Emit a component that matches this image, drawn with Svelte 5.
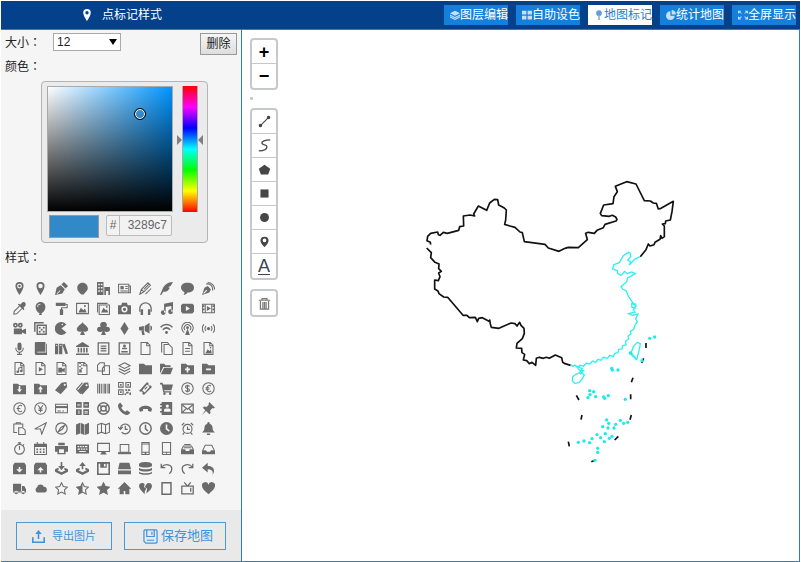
<script>
  let size = "12";
  let hex = "3289c7";
  let hue = 205;
  let activeTab = "mark";
  let activeIcon = null;

  // picker cursor, percent of the square
  const cursor = { x: 74.5, y: 22 };

  const c = (x, y, r) =>
    `M${x - r} ${y}a${r} ${r} 0 1 0 ${2 * r} 0a${r} ${r} 0 1 0 ${-2 * r} 0z`;
  const r = (x, y, w, h) => `M${x} ${y}h${w}v${h}h${-w}z`;

  const pin = "M8 0a5 5 0 0 0-5 5c0 4 5 11 5 11s5-7 5-11a5 5 0 0 0-5-5z";
  const page = "M2.5.5h7.5l3.5 3.5v11.5h-11zM9.5.5v4h4";
  const folder = "M0 2h6l2 2h8v11H0z";
  const tag = "M8 1l6-1 1 6-8 9-7-5z" + c(12, 3.5, 1.3);
  const star = "M8 1l2.2 4.6 5 .7-3.600 3.500.9 5L8 12.400l-4.500 2.400.9-5L.8 6.300l5-.7z";
  const phone = "M3.500 .7h9v14.600h-9zM3.500 12.500h9M7 14h2M3.500 2.500h9";
  const ring = c(8, 8, 7);
  const heart = "M8 15C3 11 0 8 0 5a4 4 0 0 1 8-1.500A4 4 0 0 1 16 5c0 3-3 6-8 10z";

  // f: filled shape, s: stroked lines, w: stroke width
  const icons = [
    { name: "location", f: pin + c(8, 5, 3) + c(8, 5, 1.5) },
    { name: "location outline", f: pin + c(8, 5, 2.8) },
    { name: "pen", f: "M0 16l2-9 5-3 5 5-3 5zM8 3l3-3 5 5-3 3zM2 14l4-4 .7.7-4 4z" },
    { name: "ellipse", f: "M8 1c4 0 6.500 3 6.500 6.500C14.500 11 11 13 9.500 15.500h-3C4 13 1.500 11 1.500 7.500S4 1 8 1z" },
    { name: "office", f: r(0, 0, 8, 16) + r(1.5, 2, 2, 2) + r(4.8, 2, 2, 2) + r(1.5, 6, 2, 2) + r(4.8, 6, 2, 2) + r(1.5, 10, 2, 2) + r(4.8, 10, 2, 2) + "M9 6h7v10h-2v-5h-3v5H9z" },
    { name: "newspaper", f: r(3, 5, 4, 4), s: "M.7 2.700h12.600v10.600H.7zM13 5h2.300v8.300H13M9 5.500h3M9 8h3M3 11h9" },
    { name: "pencil", s: "M1 15l2-6 8-8 3 3-8 8zM3 9l3 3M6 9l7-7M8 15l7-7" },
    { name: "quill", f: "M16 0C9 0 5 4 3 9L0 16h1.500L4 12c6 0 7-3 8-5l-2-.5 3-1.500C14 3 15 2 16 0z" },
    { name: "bubble", f: "M8 1c5 0 8 2.500 8 6s-3 6-8 6c-1 1.500-3 3-5 3 1-1 1.500-2.500 1-3.700C1.500 11 0 9 0 7c0-3.500 3-6 8-6z" },
    { name: "connection", f: "M0 16l3-9 4-2 4 4-2 4zM1.500 13.500l4-4 1 1-4 4z", s: "M5 2.500c5-1 9 3 8 8M7 .7c5 0 8.500 4 8.500 8.500" },
    { name: "eyedropper", f: "M9 3l2-2c3-3 6 1 4 4l-2 2 1 2-1 1-7-7 1-1z", s: "M8 5L1.500 11.500 1 15l3.500-.5L11 8" },
    { name: "balloon", f: "M8 0c4 0 6 3 6 6 0 4-3 7-5 8l1 2H6l1-2C5 13 2 10 2 6c0-3 2-6 6-6zM5 6c0-2 1-3 3-3V2C5 2 4 4 4 6z" },
    { name: "paint roller", f: r(1, 1, 12, 4) + r(6, 9, 4, 7), s: "M13 3h2v4H8v3" },
    { name: "image", f: "M3 13l3-6 3 3 2-2 2 5z" + c(11, 5, 1.2), s: "M.7 1.700h14.600v12.600H.7z" },
    { name: "images", f: "M5 13l3-6 3 3 1-1 2 4z" + c(12, 6, 1.1), s: "M2.700 3.700h12.600v11.600H2.700zM.7 13V1.700H13" },
    { name: "camera", f: "M0 4h4l1-3h6l1 3h4v11H0z" + c(8, 9, 3.8) + c(8, 9, 2) },
    { name: "headphones", f: r(2, 9, 3, 7) + r(11, 9, 3, 7), s: "M1 12V8a7 7 0 0 1 14 0v4", w: 1.6 },
    { name: "music", f: "M5 2l11-2v12H14V5L7 6v7H5z" + c(4, 13, 3) + c(13, 12, 3) },
    { name: "play", f: "M2 2h12l2 2v8l-2 2H2l-2-2V4zM6 5v6l5-3z" },
    { name: "film", f: "M6 5v6l5-3z" + r(1, 4, 2, 2) + r(1, 8, 2, 2) + r(13, 4, 2, 2) + r(13, 8, 2, 2), s: "M.7 2.700h14.600v10.600H.7zM4 3v10M12 3v10" },
    { name: "video camera", f: c(3, 4, 3) + c(3, 4, 1) + c(9, 4, 3) + c(9, 4, 1) + "M1 8h10v2l5-2v7l-5-2v2H1z" },
    { name: "dice", f: c(7, 7, 1.3) + c(12, 7, 1.3) + c(7, 12, 1.3) + c(12, 12, 1.3) + c(9.5, 9.5, 1.3), s: "M4 4h11v11H4zM1 12V1h11", w: 1.8 },
    { name: "pacman", f: "M14 3a8 8 0 1 0 0 10L8 8zM8 3a1 1 0 1 0 2 0 1 1 0 1 0-2 0z" },
    { name: "spades", f: "M8 0c1 3 7 5 7 9 0 3-4 4-6 2l2 5H5l2-5c-2 2-6 1-6-2 0-4 6-6 7-9z" },
    { name: "clubs", f: "M8 0a3.500 3.500 0 0 1 3 6c3-1 5 1 5 3 0 4-5 4-7 2l2 5H5l2-5c-2 2-7 2-7-2 0-2 2-4 5-3a3.500 3.500 0 0 1 3-6z" },
    { name: "diamonds", f: "M8 0l5 8-5 8-5-8z" },
    { name: "bullhorn", f: "M0 6l6-1v6l-6-1zM7 5l6-4v13l-6-3zM3 11h3l1 5H4zM14 4c3 1 3 6 0 7z" },
    { name: "wifi", f: c(8, 13, 1.8), s: "M.7 6.500c4-4.500 10.600-4.500 14.600 0M3.500 9.500c3-3 6-3 9 0", w: 1.8 },
    { name: "podcast", f: c(8, 7, 1.8) + "M8 8l3 8H5z", s: "M4 13A7 7 0 1 1 12 13M5 10a4 4 0 1 1 6 0" },
    { name: "feed", f: c(8, 8, 2), s: "M5 5a4 4 0 0 0 0 6M11 5a4 4 0 0 1 0 6M2.500 3a7 7 0 0 0 0 10M13.500 3a7 7 0 0 1 0 10" },
    { name: "mic", f: "M5.500 3a2.500 2.500 0 0 1 5 0v5a2.500 2.500 0 0 1-5 0z" + r(5, 14.5, 6, 1.5), s: "M3.500 7v1a4.500 4.500 0 0 0 9 0V7M8 12v3" },
    { name: "book", f: "M2 0h12v12H4v1h11V2h1v14H2L1 14V1z" },
    { name: "books", f: r(0, 2, 4, 13) + r(5, 2, 4, 13) + "M9 3l3-1 4 12-3 1zM1 4v1h2V4zM6 4v1h2V4z" },
    { name: "library", f: "M8 0l8 5v1H0V5z" + r(2, 7, 2, 6) + r(5.5, 7, 2, 6) + r(9, 7, 2, 6) + r(12.3, 7, 2, 6) + r(0, 14, 16, 2) },
    { name: "file text", s: "M1.500 1h13v14h-13zM4.500 5h7M4.500 8h7M4.500 11h7", w: 1.6 },
    { name: "profile", f: c(8, 5, 1.8) + r(5, 7, 6, 2), s: "M1.500 1h13v14h-13zM4 12h8", w: 1.6 },
    { name: "file empty", s: page },
    { name: "files empty", s: "M5 3h6l4 4v8.500H5zM2 13V.6h7l2 2" },
    { name: "file lines", s: page + "M5 8h6M5 11.500h6" },
    { name: "file picture", f: "M4 14l3-5 2 2 2-2 1 5z" + c(10.5, 7, 1), s: page },
    { name: "file music", f: c(5.8, 12, 1.6) + c(10.2, 11, 1.6), s: page + "M7 12V7.500l4-1V11" },
    { name: "file play", f: "M6 6v6l5-3z", s: page },
    { name: "file video", f: "M4 7h5v2l3-2v6l-3-2v2H4z", s: page },
    { name: "file zip", f: r(4, 1, 2, 1.6) + r(6, 3, 2, 1.6) + r(4, 5, 2, 1.6) + r(6, 7, 2, 1.6) + r(4, 9, 3, 4), s: page },
    { name: "copy", s: "M3.500 1H9v10H.7V4zM9 4.500h6.300v10.800H6.700V7.500L9.500 4.500" },
    { name: "stack", s: "M8 1l7 3.500L8 8 1 4.500zM1 8l7 3.500L15 8M1 11.500L8 15l7-3.500" },
    { name: "folder", f: folder },
    { name: "folder open", f: "M0 14V2h5l2 2h6v2H4zM5 7h11l-3 8H1z" },
    { name: "folder plus", f: folder + "M7 6v2H5v2h2v3h2v-3h2V8H9V6z" },
    { name: "folder minus", f: folder + r(5, 8, 6, 2) },
    { name: "folder download", f: folder + "M7 5v4H5l3 4 3-4H9V5z" },
    { name: "folder upload", f: folder + "M7 13V9H5l3-4 3 4H9v4z" },
    { name: "price tag", f: tag },
    { name: "price tags", f: "M10 1l5-.5 1 6-8 9-6-5z" + c(13, 4, 1.3), s: "M8 .8L.6 9 6 14.500" },
    { name: "barcode", f: r(0, 2, 1, 12) + r(2, 2, 2, 12) + r(5, 2, 1, 12) + r(7, 2, 1, 12) + r(9, 2, 2, 12) + r(12, 2, 1, 12) + r(14, 2, 2, 12) },
    { name: "qrcode", f: r(2.5, 2.5, 2, 2) + r(11.5, 2.5, 2, 2) + r(2.5, 11.5, 2, 2) + r(9, 9, 2, 2) + r(12, 9, 3, 2) + r(10, 12, 3, 2) + r(14, 13, 2, 3) + r(8, 14, 2, 2), s: "M.7.7h5.600v5.600H.7zM9.700.7h5.600v5.600H9.700zM.7 9.700h5.600v5.600H.7z" },
    { name: "ticket", f: "M0 11L10 0l2 2c-1 2 0 3 2 2l2 2L6 16l-2-2c1-2 0-3-2-2zM4 10l3 3 6-7-3-3z", s: "M7 9l3-3" },
    { name: "cart", f: "M0 1h3l1 2h12l-2 7H5l.5 1.500H14V13H4L2 3H0z" + c(5.5, 14.5, 1.5) + c(12.5, 14.5, 1.5) },
    { name: "dollar", s: ring + "M10.500 5.500c-1-1.500-5-1.500-5 .7 0 2.500 5 1.200 5 3.600 0 2.200-4 2.200-5 .5M8 3.500v9" },
    { name: "euro", s: ring + "M11 5c-2-2-5-.5-5 3s3 5 5 3M4.500 7h4.500M4.500 9h4.500" },
    { name: "pound", s: ring + "M11 5c-2-2-5-.5-5 3s3 5 5 3M4.500 8h4.500" },
    { name: "yen", s: ring + "M5 4l3 4 3-4M8 8v4.500M5.500 8.500h5M5.500 10.500h5" },
    { name: "credit card", f: r(0, 5, 16, 2.5), s: "M.7 2.700h14.600v10.600H.7zM3 11h4M9 11h2" },
    { name: "calculator", f: r(0, 0, 7, 7) + r(9, 0, 7, 7) + r(0, 9, 7, 7) + r(9, 9, 7, 7) + r(1.5, 3, 4, 1.2) + r(10.5, 3, 4, 1.2) + r(3, 10.5, 1.2, 4) + r(10.5, 11, 4, 1) + r(10.5, 13, 4, 1) },
    { name: "lifebuoy", s: c(8, 8, 7) + c(8, 8, 3.2) + "M3 4l3 2M13 4l-3 2M3 12l3-2M13 12l-3-2", w: 1.8 },
    { name: "phone", f: "M3 1l3 4-2 2c1 2 3 4 5 5l2-2 4 3c-1 2-2 3-4 3C6 16 0 9 0 5c0-2 1-3 3-4z" },
    { name: "hang up", f: "M0 9c1-6 15-6 16 0l-1 3-4-1V8.500H5V11l-4 1z" },
    { name: "address book", f: "M2 0h13v16H2zM7 5a2 2 0 1 0 4 0 2 2 0 1 0-4 0zM5 12h8V9L11 8H7L5 9z" + r(0, 2, 2, 2) + r(0, 6, 2, 2) + r(0, 11, 2, 2) },
    { name: "envelope", s: "M1 2.500h14v11H1zM2 4l6 5 6-5M2 12.500l4-4M14 12.500l-4-4", w: 1.5 },
    { name: "pushpin", f: "M9 0l7 7-2 1-1-.5-3 3 .5 3L9 15l-4-4-5 5 4-6-3-3 1.500-1.500 3 .5 3-3L8 2z" },
    { name: "paste", s: "M5 13H1V2.500h11V6M4 3V1h5v2M7 7h5l3 3v5.300H7z" },
    { name: "compass arrow", s: "M1 8.500L15 1 9.500 15 8 8.500z" },
    { name: "compass", s: ring + "M12 4L9 9l-5 3 3-5z", w: 1.4 },
    { name: "map filled", f: "M0 3l5-2v13l-5 2zM5.700 1L10.300 3v13l-4.600-2zM11 3l5-2v13l-5 2z" },
    { name: "map", s: "M.7 3.500L5.500 1.500l5 2 4.800-2v11l-4.800 2-5-2-4.800 2zM5.500 1.500v11M10.500 3.500v11" },
    { name: "history", s: "M3 8a6 6 0 1 1 1.500 4.500M0 6l3 3 3-3M9 4.500V9h3", w: 1.5 },
    { name: "clock", s: ring + "M8 3.500v5l3 2.500", w: 1.8 },
    { name: "clock filled", f: c(8, 8, 8) + "M7 3v6l4 3 1-1.500L9 8V3z" },
    { name: "alarm", s: c(8, 8.5, 5.5) + "M8 5.500V9h3M1 4l3-3M15 4l-3-3M4 13l-2 2.500M12 13l2 2.500", w: 1.4 },
    { name: "bell", f: "M8 0c1 0 1.500 1 1.500 2C12 3 13 5 13 7c0 3 1 4 3 6H0c2-2 3-3 3-6 0-2 1-4 3.500-5C6.500 1 7 0 8 0z" + r(6, 14, 4, 2) },
    { name: "stopwatch", s: c(8, 9, 6) + "M8 3V1M6 1h4M8 5v4.500M12.500 4l1-1", w: 1.4 },
    { name: "calendar", f: r(0, 2, 16, 4) + r(3, 8, 2, 2) + r(7, 8, 2, 2) + r(11, 8, 2, 2) + r(3, 11.5, 2, 2) + r(7, 11.5, 2, 2) + r(11, 11.5, 2, 2), s: "M.7 3v12.300h14.600V3M4 0v3M12 0v3" },
    { name: "printer", f: r(4, 1, 8, 3) + "M0 5h16v7h-3v3H3v-3H0zM5 9v4.500h6V9z" },
    { name: "keyboard", f: "M0 3h16v11H0z" + r(2, 5, 2, 1.5) + r(5, 5, 2, 1.5) + r(8, 5, 2, 1.5) + r(11, 5, 3, 1.5) + r(2, 8, 3, 1.5) + r(6, 8, 2, 1.5) + r(9, 8, 2, 1.5) + r(12, 8, 2, 1.5) + r(4, 11, 8, 1.3) },
    { name: "display", f: "M6 12h4l2 3.500H4z", s: "M.7 1.700h14.600v10H.7z" },
    { name: "laptop", f: "M0 12.500h16V15H0z", s: "M2.700 3h10.600v9.500H2.700z" },
    { name: "mobile", s: phone },
    { name: "tablet", s: "M3 .7h10v14.600H3zM3 12.700h10M7.500 14h1" },
    { name: "drawer full", f: "M0 9h5l1 2h4l1-2h5v6H0z", s: "M1 9l2-4h10l2 4M4 3h8M3.500 7h9" },
    { name: "drawer", f: "M0 10h5l1 2h4l1-2h5v5H0z", s: "M1 10l3-6h8l3 6" },
    { name: "box in", f: "M2 1h12l2 3v11H0V4zM7 6v3H4l4 4 4-4H9V6z" },
    { name: "box out", f: "M2 1h12l2 3v11H0V4zM7 13v-3H4l4-4 4 4H9v3z" },
    { name: "download", f: "M7 0h2v5h3L8 10 4 5h3zM0 9l4-2 1 2-2 1 5 2.500 5-2.500-2-1 1-2 4 2v3l-8 4-8-4z" },
    { name: "upload", f: "M7 9h2V5h3L8 0 4 5h3zM0 9l4-2 1 2-2 1 5 2.500 5-2.500-2-1 1-2 4 2v3l-8 4-8-4z" },
    { name: "floppy disk", f: r(4, 1, 8, 6) + r(8.5, 2, 2, 3.5), s: "M1 1h14v14H1z", w: 2 },
    { name: "drive", f: "M2 1h12l2 8H0zM0 10.500h16V15H0z" },
    { name: "database", f: "M0 3c0-4 16-4 16 0v1.500c0 3-16 3-16 0zM0 7c3 2.500 13 2.500 16 0v2.500c0 3-16 3-16 0zM0 12c3 2.500 13 2.500 16 0v1.500c0 3-16 3-16 0z" },
    { name: "undo", s: "M1.500 2v5h5M2 6.500C6 1 15 3 14.500 9c0 2-1 4-3 5.500", w: 1.6 },
    { name: "redo", s: "M14.500 2v5h-5M14 6.500C10 1 1 3 1.500 9c0 2 1 4 3 5.500", w: 1.6 },
    { name: "reply", f: "M7 1v4c7 0 10 5 6 11 1-5-1-7-6-7v4L0 7z" },
    { name: "truck", f: "M0 2h10v9H0zM11 5h3l2 4v4H0v-1.500h11z" + c(4, 13, 2.2) + c(12.5, 13, 2.2) },
    { name: "cloud", f: "M4 13a4 4 0 0 1 0-7c1-4 7-4 8 0 5-.5 5 7 1 7z" },
    { name: "star empty", s: star },
    { name: "star half", f: "M8 1v11.400l-4.500 2.400.9-5L.8 6.300l5-.7z", s: star },
    { name: "star full", f: star, s: star },
    { name: "home", f: "M8 0l8 8-1 1-1-1v7H9v-4H7v4H2V8L1 9 0 8z" },
    { name: "broken heart", f: "M7 15C3 11 0 8 0 5c0-4 5-5 7-2L6 6l3 2-2 4zM9 14l1-6-3-2 2-3c2-3 7-2 7 2 0 3-3 6-7 9z" },
    { name: "frame", s: "M2.500 1h11v14h-11z", w: 1.8 },
    { name: "tv", s: "M1 5h14v9.500H1zM8 5L4 .5M8 5l4-4.500M12 7v5", w: 1.6 },
    { name: "heart", f: heart },
  ];

  const tabs = [
    { id: "layer", label: "图层编辑", f: "M8 1l8 4-8 4-8-4zM0 7l8 4 8-4v2l-8 4-8-4zM0 10l8 4 8-4v2l-8 4-8-4z" },
    { id: "color", label: "自助设色", f: r(0, 1, 7, 6) + r(9, 1, 7, 6) + r(0, 9, 7, 6) + r(9, 9, 7, 6) },
    { id: "mark", label: "地图标记", f: c(8, 5, 4.5) + r(7, 9, 2, 7) },
    { id: "chart", label: "统计地图", f: "M7 2a7 7 0 1 0 7 7H7zM9 0v7h7a7 7 0 0 0-7-7z" },
    { id: "full", label: "全屏显示", f: "M0 1h5L3.500 3 6 5 5 6 2.500 4 0 6zM16 1h-5l1.500 2L10 5l1 1 2.500-2L16 6zM0 15h5l-1.500-2L6 11l-1-1-2.500 2L0 10zM16 15h-5l1.500-2L10 11l1-1 2.500 2 2.500-2z" },
  ];

  const tools = [
    { name: "line", f: c(3, 13, 2.2) + c(13, 3, 2.2), s: "M3 13L13 3" },
    { name: "freehand", s: "M15 1C9 1 4 3 5 5.500s6 1 6 4-4 5-10 5", w: 1.6 },
    { name: "polygon", f: "M8 2l7 5-2.500 7h-9L1 7z" },
    { name: "rectangle", f: r(3, 3, 10, 10) },
    { name: "circle", f: c(8, 8, 5.5) },
    { name: "marker", f: "M8 2a5 5 0 0 0-5 5c0 3 5 8 5 8s5-5 5-8a5 5 0 0 0-5-5z" + c(8, 6.5, 2.3) },
  ];

  const islands = [
    [185, 145], [187, 150], [204, 150], [299, 55], [314, 51], [276, 122],
    [119, 212], [131, 215], [120, 224], [114, 233], [137, 230], [161, 231],
    [164, 235], [175, 227], [226, 238], [170, 300], [176, 310], [158, 320],
    [174, 324], [192, 324], [197, 313], [211, 301], [221, 310], [233, 307],
    [141, 344], [152, 353], [166, 341], [178, 355], [186, 349], [163, 365],
    [126, 356], [119, 368], [102, 363], [85, 367], [143, 385], [143, 397],
    [135, 421], [241, 99],
  ];
</script>

{#snippet glyph(icon)}
  <svg viewBox="0 0 16 16" aria-hidden="true">
    {#if icon.f}
      <path d={icon.f} fill="currentColor" fill-rule="evenodd" />
    {/if}
    {#if icon.s}
      <path d={icon.s} fill="none" stroke="currentColor" stroke-width={icon.w || 1.3} />
    {/if}
  </svg>
{/snippet}

<div class="app">
  <header>
    <h1>
      {@render glyph({ f: pin + c(8, 5, 2.2) })}
      点标记样式
    </h1>
    <nav>
      {#each tabs as tab}
        <button class:active={activeTab === tab.id} on:click={() => (activeTab = tab.id)}>
          {@render glyph(tab)}{tab.label}
        </button>
      {/each}
    </nav>
  </header>

  <div class="content">
    <aside>
      <div class="settings">
        <div class="row">
          <label for="size">大小<span class="colon">：</span></label>
          <div class="select">
            <select id="size" bind:value={size}>
              <option>10</option>
              <option>12</option>
              <option>14</option>
              <option>16</option>
            </select>
          </div>
          <button class="delete">删除</button>
        </div>

        <label class="title" for="hex">颜色<span class="colon">：</span></label>
        <div class="picker">
          <div class="picker-top">
            <div class="shade" style:--hue={hue}>
              <span class="cursor" style:left="{cursor.x}%" style:top="{cursor.y}%"></span>
            </div>
            <div class="hue">
              <input type="range" min="0" max="360" aria-label="hue" bind:value={hue} />
              <span class="arrow left" style:top="{100 - hue / 3.6}%"></span>
              <span class="arrow right" style:top="{100 - hue / 3.6}%"></span>
            </div>
          </div>
          <div class="picker-bottom">
            <div class="swatch" style:background="#{hex}"></div>
            <div class="hex">
              <label for="hex">#</label>
              <input id="hex" type="text" maxlength="6" bind:value={hex} />
            </div>
          </div>
        </div>

        <div class="title">样式<span class="colon">：</span></div>
        <div class="icons">
          {#each icons as icon}
            <button
              title={icon.name}
              aria-label={icon.name}
              class:active={activeIcon === icon.name}
              on:click={() => (activeIcon = icon.name)}
            >
              {@render glyph(icon)}
            </button>
          {/each}
        </div>
      </div>

      <div class="actions">
        <button>
          {@render glyph({ f: "M7 11V5H4l4-5 4 5H9v6zM0 9h2v5h12V9h2v7H0z" })}
          导出图片
        </button>
        <button class="save">
          {@render glyph({ s: "M2 1h12l1 1v12l-1 1H3l-2-2V2zM4 1v7h8V1M9.500 3v3M4 12h8" })}
          保存地图
        </button>
      </div>
    </aside>

    <main>
      <svg class="map" viewBox="0 0 1671 1590" role="img" aria-label="map">
        <g class="border">
          <path transform="translate(519 420)" d="M450 235L432 244 400 234 390 223 328 215 322 188 315 186 300 172 285 168 269 163 272 150 274 120 268 114 251 105 248 89 238 88 224 99 215 121 190 108 176 132 179 138 165 135 145 138 146 168 134 170 131 181 97 190 85 187 75 196 70 194 68 186 47 190 38 199 36 212 46 217 47 224M35 234L49 248 47 263 60 277 72 282 71 296 79 304 71 309 75 320 70 332 59 330 59 357 69 363 72 371 86 381 98 382 144 436 156 436 163 443 181 442 187 455 191 445 202 443 222 454 224 450 226 462 229 472 252 475 288 459 300 461 306 468 314 457 318 466 327 475 328 490 322 506 306 520 304 534 320 535 321 548 329 553 325 570 335 572 343 581 351 577 362 586 364 565 373 562 385 565 394 562 403 565 421 555 440 563 443 577 450 581 467 586" />
          <path transform="translate(894 420)" d="M75 235L85 232 115 233 142 209 137 190 145 187 163 190 171 181 190 173 195 163 228 153 231 148 227 141 217 136 208 139 185 137 181 130 191 105 219 101 222 80 232 65 226 49 260 35 288 42 313 92 331 93 340 99 349 100 355 117 363 115 400 94 396 125 391 150 377 153 376 161 367 162 373 168 373 200 366 205 362 197 360 208 345 217 342 224 330 228 325 222 318 239 301 260" />
          <path transform="translate(924 870)" d="M288 69v15M281 115l-6 14M249 173l-5 14M242 223v15M244 285l-4 14M205 349l-11 11M79 226l8 14M96 285l-3 14M55 365l3 14M124 425l14-6" />
        </g>
        <g class="coast">
          <path transform="translate(894 420)" d="M300 260L284 268 268 285 272 276 263 270 272 260 271 250 265 247 250 257 238 278 221 284 218 297 232 302 233 310 243 316 254 304 262 311 275 306 286 311 270 320 263 323 260 335 243 350 249 358 258 362 266 380 281 402 288 408 280 420 285 426 266 431 278 436 294 432 287 447 292 455 286 463 281 478 271 484 273 492 264 498 266 507 257 513 258 525 248 527 246 537 236 538 234 548 224 550 220 560 209 556 202 565 190 562 183 571 174 568 167 577 157 573 150 582 139 580 130 589 121 586 112 592 105 585 98 589 92 584" />
          <path transform="translate(894 420)" d="M275 401l12 1-1 12-10-2zM110 588l17 8-8 10M292 517l9 4-3 17-8 31-18-17 8-22z" />
          <path transform="translate(924 870)" d="M68 170l11-8 14-5 10 8-7 12-9 11-13 2-7-8zM83 145l8 7 9 0-9 11M243 97l17 22" />
          <g transform="translate(924 870)">
            {#each islands as [x, y]}
              <circle cx={x} cy={y} r="5" />
            {/each}
          </g>
        </g>
      </svg>

      <div class="tools">
        <div class="bar zoom">
          <button aria-label="zoom in">+</button>
          <button aria-label="zoom out">−</button>
        </div>
        <span class="dot"></span>
        <div class="bar">
          {#each tools as tool}
            <button aria-label={tool.name} title={tool.name}>{@render glyph(tool)}</button>
          {/each}
          <button class="text" title="text">A</button>
        </div>
        <div class="bar trash">
          <button aria-label="delete all">
            {@render glyph({ s: "M1 4h14M5 4V2h6v2M3 5v10h10V5M6 6v8M8 6v8M10 6v8", w: 1.5 })}
          </button>
        </div>
      </div>
    </main>
  </div>
</div>

<style>
  :global(body) {
    margin: 0;
    background: #fff;
  }
  .app,
  .app * {
    box-sizing: border-box;
  }
  .app {
    min-height: 100vh;
    padding: 1px;
    display: flex;
    flex-direction: column;
    color: #222;
    font: 12px/20px "Liberation Sans", "Noto Sans CJK SC", sans-serif;
  }
  button,
  input,
  select {
    margin: 0;
    padding: 0;
    border: 0;
    color: inherit;
    background: none;
    font: inherit;
  }
  button {
    display: flex;
    align-items: center;
    justify-content: center;
    cursor: pointer;
  }
  svg {
    display: block;
    flex: none;
  }
  header {
    height: 28px;
    padding: 0 4px 0 80px;
    display: flex;
    align-items: center;
    justify-content: space-between;
    background: #04418a;
    color: #fff;
  }
  h1 {
    margin: 0;
    display: flex;
    align-items: center;
    gap: 9px;
    font: inherit;
    & svg {
      width: 12px;
      height: 12px;
    }
  }
  nav {
    display: flex;
    gap: 8px;
    & button {
      width: 64px;
      height: 20px;
      justify-content: flex-end;
      background: #1580dc;
      white-space: nowrap;
      & svg {
        width: 10px;
        height: 10px;
        opacity: 0.75;
      }
      &.active {
        background: #fff;
        color: #2a7fc4;
      }
    }
  }
  .content {
    flex: 1;
    display: flex;
    border: 1px solid #2e80bd;
    border-left: 0;
  }
  aside {
    width: 241px;
    flex: none;
    display: flex;
    flex-direction: column;
    border-right: 1px solid #2e80ac;
    background: #f5f5f5;
  }
  .settings {
    flex: 1;
    padding: 3px 4px 0;
  }
  .row {
    height: 23px;
    display: flex;
    align-items: flex-start;
    & label {
      width: 48px;
      line-height: 18px;
    }
  }
  .colon {
    font-family: "Noto Sans CJK TC", sans-serif;
  }
  .select {
    position: relative;
    &::after {
      content: "";
      position: absolute;
      right: 4px;
      top: 6px;
      border: 4px solid transparent;
      border-top: 6px solid #000;
      border-bottom: 0;
      pointer-events: none;
    }
  }
  select {
    display: block;
    width: 68px;
    height: 18px;
    padding-left: 3px;
    appearance: none;
    border: 1px solid #aaa;
    background: #fff;
    line-height: 16px;
  }
  .delete {
    width: 37px;
    height: 22px;
    margin-left: auto;
    border: 1px solid #999;
    background: linear-gradient(#f6f6f6, #dedede);
    line-height: 20px;
  }
  .title {
    display: block;
  }
  .picker {
    width: 167px;
    margin: 4px 0 4px 36px;
    padding: 4px 5px;
    border: 1px solid #b4b4b4;
    border-radius: 4px;
    background: #ebebeb;
  }
  .picker-top {
    display: flex;
    gap: 9px;
  }
  .shade {
    position: relative;
    width: 126px;
    height: 126px;
    border: 1px solid #aaa;
    background:
      linear-gradient(transparent, #000),
      linear-gradient(to right, #fff, hsl(var(--hue), 100%, 50%));
  }
  .cursor {
    position: absolute;
    width: 10px;
    height: 10px;
    margin: -5px;
    border: 1px solid #fff;
    border-radius: 50%;
    outline: 1px solid #000;
  }
  .hue {
    position: relative;
    width: 16px;
    height: 126px;
    & input {
      display: block;
      width: 16px;
      height: 126px;
      appearance: none;
      writing-mode: vertical-lr;
      direction: rtl;
      background: linear-gradient(#f00, #f0f, #00f, #0ff, #0f0, #ff0, #f00);
      border: 1px solid #aaa;
      border-width: 0 1px;
      &::-webkit-slider-thumb {
        appearance: none;
        width: 16px;
        height: 4px;
      }
    }
  }
  .arrow {
    position: absolute;
    margin-top: -5px;
    border: 5px solid transparent;
    &.left {
      right: 16px;
      border-left-color: #808080;
      border-right: 0;
    }
    &.right {
      left: 16px;
      border-right-color: #808080;
      border-left: 0;
    }
  }
  .picker-bottom {
    margin-top: 3px;
    padding-left: 2px;
    display: flex;
    align-items: flex-start;
    gap: 7px;
  }
  .swatch {
    width: 50px;
    height: 23px;
    border: 1px solid #999;
  }
  .hex {
    width: 66px;
    height: 21px;
    display: flex;
    border: 1px solid #bbb;
    border-radius: 2px;
    background: #f2f2f2;
    color: #666;
    line-height: 19px;
    & label {
      width: 13px;
      text-align: center;
      border-right: 1px solid #bbb;
    }
    & input {
      flex: 1;
      min-width: 0;
      padding-right: 4px;
      text-align: right;
    }
  }
  .icons {
    margin: 10px 0 12px 4px;
    display: grid;
    grid-template-columns: repeat(10, 21px);
    grid-auto-rows: 20px;
    color: #6b6b6b;
    & svg {
      width: 13px;
      height: 13px;
    }
    & button.active {
      color: #1580dc;
    }
  }
  .actions {
    padding: 12px 15px 11px;
    display: flex;
    gap: 12px;
    background: #e9e9e9;
    & button {
      flex: 1;
      height: 28px;
      gap: 7px;
      border: 1px solid #4a9ad8;
      color: #3d94dc;
      font-size: 11px;
    }
    & svg {
      width: 13px;
      height: 13px;
    }
    & .save {
      gap: 3px;
      padding-left: 6px;
      font-size: 13px;
      & svg {
        width: 15px;
        height: 15px;
      }
    }
  }
  main {
    position: relative;
    flex: 1;
    min-width: 0;
  }
  .map {
    width: 100%;
  }
  .border {
    fill: none;
    stroke: #111;
    stroke-width: 5;
    stroke-linejoin: round;
  }
  .coast {
    fill: none;
    stroke: #2ff0f0;
    stroke-width: 4;
    & circle {
      fill: #1eeaea;
      stroke: none;
    }
  }
  .tools {
    position: absolute;
    left: 8px;
    top: 8px;
    display: flex;
    flex-direction: column;
  }
  .bar {
    width: 28px;
    border: 2px solid #c6c9cc;
    border-radius: 4px;
    background: #fff;
    color: #464646;
    & button {
      width: 100%;
      height: 24px;
      &:not(:last-child) {
        border-bottom: 1px solid #c6c9cc;
      }
    }
    & svg {
      width: 13px;
      height: 13px;
    }
  }
  .zoom {
    color: #000;
    font-size: 18px;
    font-weight: bold;
  }
  .dot {
    width: 3px;
    height: 3px;
    margin: 7px 0 8px;
    border-radius: 1px;
    background: #c6c9cc;
  }
  .bar .text {
    color: #3c4650;
    font-size: 18px;
    text-decoration: underline;
    text-underline-offset: 2px;
  }
  .trash {
    margin-top: 9px;
    color: #777;
  }
</style>
